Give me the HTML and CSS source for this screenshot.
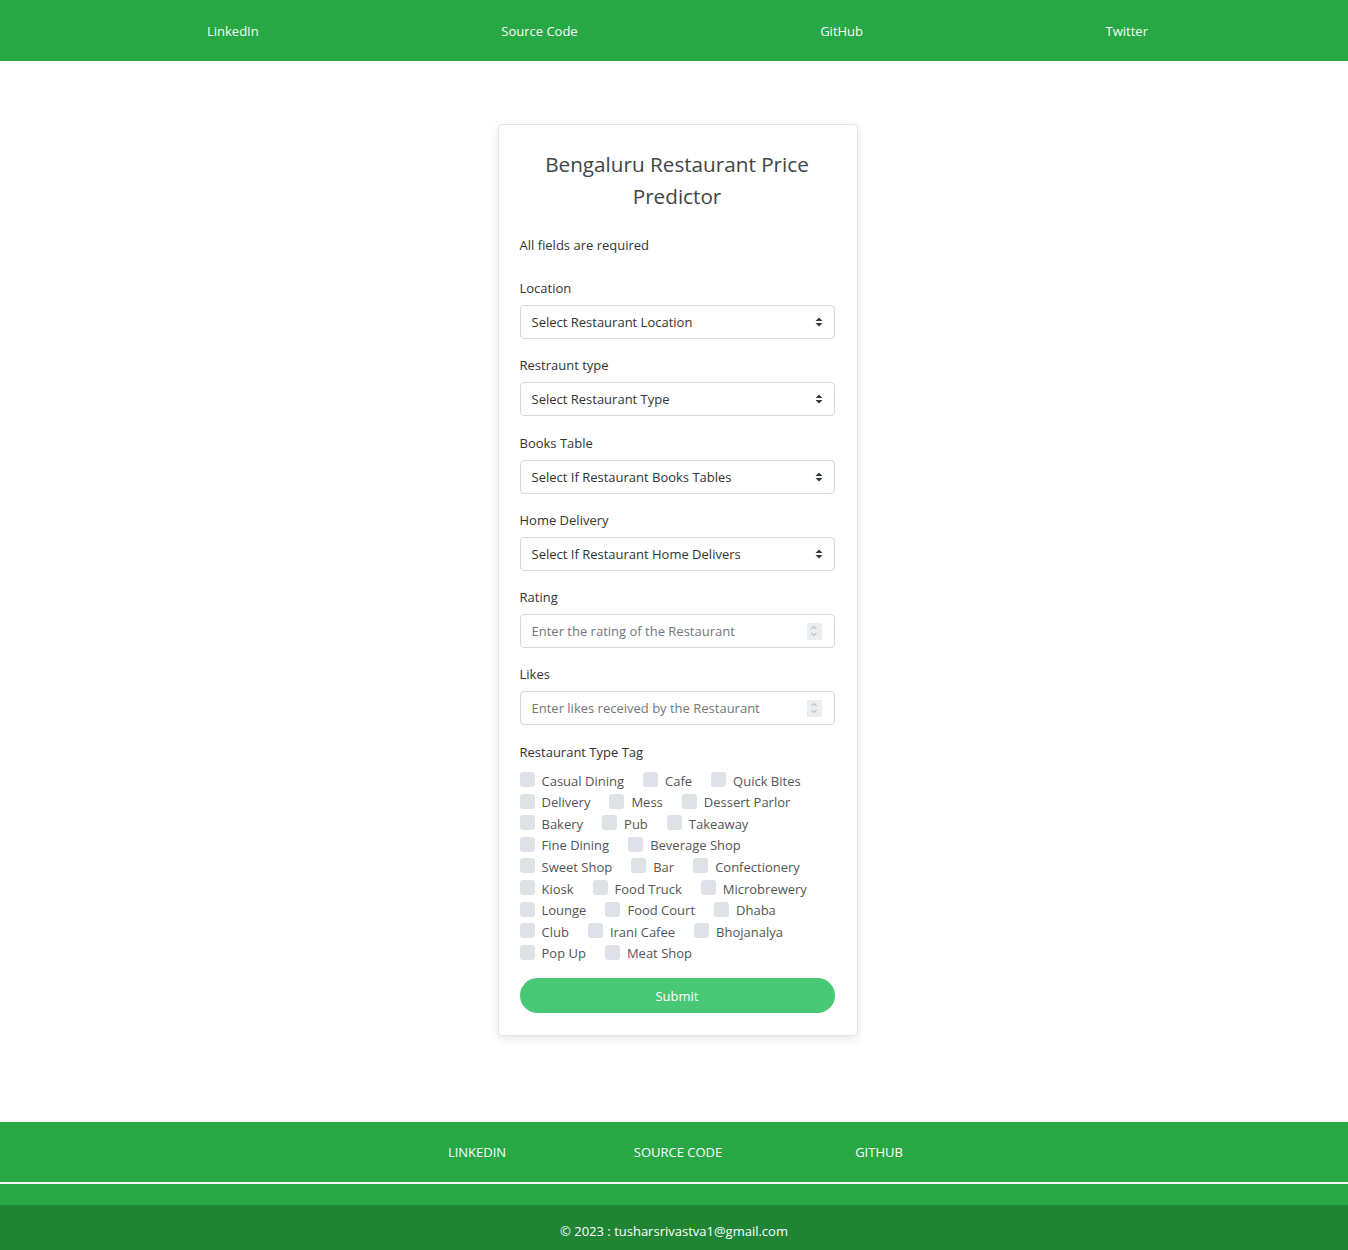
FILE: index.html
```html
<!DOCTYPE html>
<html>
<head>
<meta charset="utf-8">
<link rel="stylesheet" href="styles.css">
</head>
<body>
<header class="topnav">
  <a class="toplink">LinkedIn</a>
  <a class="toplink">Source Code</a>
  <a class="toplink">GitHub</a>
  <a class="toplink">Twitter</a>
</header>
<main class="main">
  <div class="card">
    <h1 class="title">Bengaluru Restaurant Price Predictor</h1>
    <p class="note">All fields are required</p>

    <div class="field">
      <div class="label">Location</div>
      <div class="select"><span>Select Restaurant Location</span><svg class="caret" width="8" height="10" viewBox="0 0 8 10"><path d="M4 0.5 L7.5 4 L0.5 4 Z M4 9.5 L7.5 6 L0.5 6 Z" fill="#343a40"/></svg></div>
    </div>
    <div class="field">
      <div class="label">Restraunt type</div>
      <div class="select"><span>Select Restaurant Type</span><svg class="caret" width="8" height="10" viewBox="0 0 8 10"><path d="M4 0.5 L7.5 4 L0.5 4 Z M4 9.5 L7.5 6 L0.5 6 Z" fill="#343a40"/></svg></div>
    </div>
    <div class="field">
      <div class="label">Books Table</div>
      <div class="select"><span>Select If Restaurant Books Tables</span><svg class="caret" width="8" height="10" viewBox="0 0 8 10"><path d="M4 0.5 L7.5 4 L0.5 4 Z M4 9.5 L7.5 6 L0.5 6 Z" fill="#343a40"/></svg></div>
    </div>
    <div class="field">
      <div class="label">Home Delivery</div>
      <div class="select"><span>Select If Restaurant Home Delivers</span><svg class="caret" width="8" height="10" viewBox="0 0 8 10"><path d="M4 0.5 L7.5 4 L0.5 4 Z M4 9.5 L7.5 6 L0.5 6 Z" fill="#343a40"/></svg></div>
    </div>
    <div class="field">
      <div class="label">Rating</div>
      <div class="select number"><span>Enter the rating of the Restaurant</span><span class="spin"><svg width="8" height="14" viewBox="0 0 8 14"><path d="M1.5 5 L4 2.5 L6.5 5 M1.5 9 L4 11.5 L6.5 9" fill="none" stroke="#a0a4a8" stroke-width="1"/></svg></span></div>
    </div>
    <div class="field">
      <div class="label">Likes</div>
      <div class="select number"><span>Enter likes received by the Restaurant</span><span class="spin"><svg width="8" height="14" viewBox="0 0 8 14"><path d="M1.5 5 L4 2.5 L6.5 5 M1.5 9 L4 11.5 L6.5 9" fill="none" stroke="#a0a4a8" stroke-width="1"/></svg></span></div>
    </div>

    <div class="label tagtitle">Restaurant Type Tag</div>
    <div class="tags">
      <div class="row"><label class="tag"><span class="box"></span>Casual Dining</label><label class="tag"><span class="box"></span>Cafe</label><label class="tag"><span class="box"></span>Quick Bites</label></div>
      <div class="row"><label class="tag"><span class="box"></span>Delivery</label><label class="tag"><span class="box"></span>Mess</label><label class="tag"><span class="box"></span>Dessert Parlor</label></div>
      <div class="row"><label class="tag"><span class="box"></span>Bakery</label><label class="tag"><span class="box"></span>Pub</label><label class="tag"><span class="box"></span>Takeaway</label></div>
      <div class="row"><label class="tag"><span class="box"></span>Fine Dining</label><label class="tag"><span class="box"></span>Beverage Shop</label></div>
      <div class="row"><label class="tag"><span class="box"></span>Sweet Shop</label><label class="tag"><span class="box"></span>Bar</label><label class="tag"><span class="box"></span>Confectionery</label></div>
      <div class="row"><label class="tag"><span class="box"></span>Kiosk</label><label class="tag"><span class="box"></span>Food Truck</label><label class="tag"><span class="box"></span>Microbrewery</label></div>
      <div class="row"><label class="tag"><span class="box"></span>Lounge</label><label class="tag"><span class="box"></span>Food Court</label><label class="tag"><span class="box"></span>Dhaba</label></div>
      <div class="row"><label class="tag"><span class="box"></span>Club</label><label class="tag"><span class="box"></span>Irani Cafee</label><label class="tag"><span class="box"></span>Bhojanalya</label></div>
      <div class="row"><label class="tag"><span class="box"></span>Pop Up</label><label class="tag"><span class="box"></span>Meat Shop</label></div>
    </div>

    <button class="submit">Submit</button>
  </div>
</main>
<footer class="footer">
  <nav class="footnav">
    <a class="footlink">LINKEDIN</a>
    <a class="footlink">SOURCE CODE</a>
    <a class="footlink">GITHUB</a>
  </nav>
  <div class="rule"></div>
  <div class="band"></div>
  <div class="copy">© 2023 : tusharsrivastva1@gmail.com</div>
</footer>
</body>
</html>
```

FILE: styles.css
```css
* { box-sizing: border-box; }
html, body { margin: 0; padding: 0; }
body {
  font-family: "Open Sans", "Noto Sans", sans-serif;
  font-size: 13px;
  color: #444;
  background: #fff;
}
a { text-decoration: none; color: #fff; }

.topnav {
  height: 61px;
  background: #28a745;
  display: flex;
  align-items: center;
  justify-content: space-between;
  padding: 0 200px 0 207px;
}
.toplink { font-size: 13px; color: #f4fff6; }

.main {
  display: flex;
  justify-content: center;
  padding: 63px 0 86px;
}
.card {
  width: 360px;
  margin-left: 7px;
  border: 1px solid #e4e4e4;
  border-radius: 4px;
  box-shadow: 0 3px 10px rgba(0,0,0,0.10);
  padding: 23px 22px 22px 21px;
}
.title {
  margin: 0 0 23px;
  font-weight: 400;
  font-size: 20.7px;
  line-height: 32px;
  text-align: center;
  color: #444;
  padding: 0;
}
.note { margin: 0 0 23px; line-height: 20px; color: #333; }
.field { margin-bottom: 16.3px; }
.label { line-height: 20px; margin-bottom: 7px; color: #333; }
.select {
  height: 34px;
  border: 1px solid #d6d9dc;
  border-radius: 4px;
  display: flex;
  align-items: center;
  justify-content: space-between;
  padding: 0 11px 0 11px;
  color: #333;
}
.caret { display: block; margin-right: 0; }
.number { color: #72777c; padding-right: 12px; }
.spin {
  width: 15px;
  height: 17px;
  background: #ebedef;
  display: flex;
  align-items: center;
  justify-content: center;
}
.tagtitle { margin-top: 0; margin-bottom: 8px; }
.tags { display: flex; flex-direction: column; margin-bottom: 14px; }
.row { display: flex; height: 21.6px; align-items: center; }
.tag {
  display: flex;
  align-items: center;
  color: #555;
  margin-right: 19px;
  line-height: 20px;
}
.box {
  width: 15px;
  height: 15px;
  border-radius: 3px;
  background: #dee2e6;
  margin-right: 7px;
  margin-top: -2px;
}
.submit {
  width: 100%;
  height: 35px;
  border: none;
  border-radius: 18px;
  background: #48c774;
  color: #fff;
  font-family: inherit;
  font-size: 13px;
  display: block;
}

.footer { background: #28a745; }
.footnav {
  height: 60px;
  display: flex;
  justify-content: center;
  align-items: center;
  padding-left: 8px;
}
.footlink { width: 201px; text-align: center; font-size: 13px; color: #fff; }
.rule { height: 2px; background: #fff; }
.band { height: 21px; background: #28a745; }
.copy {
  height: 45px;
  padding-top: 6px;
  background: #1f8535;
  color: #fff;
  display: flex;
  align-items: center;
  justify-content: center;
  font-size: 13px;
}
```
